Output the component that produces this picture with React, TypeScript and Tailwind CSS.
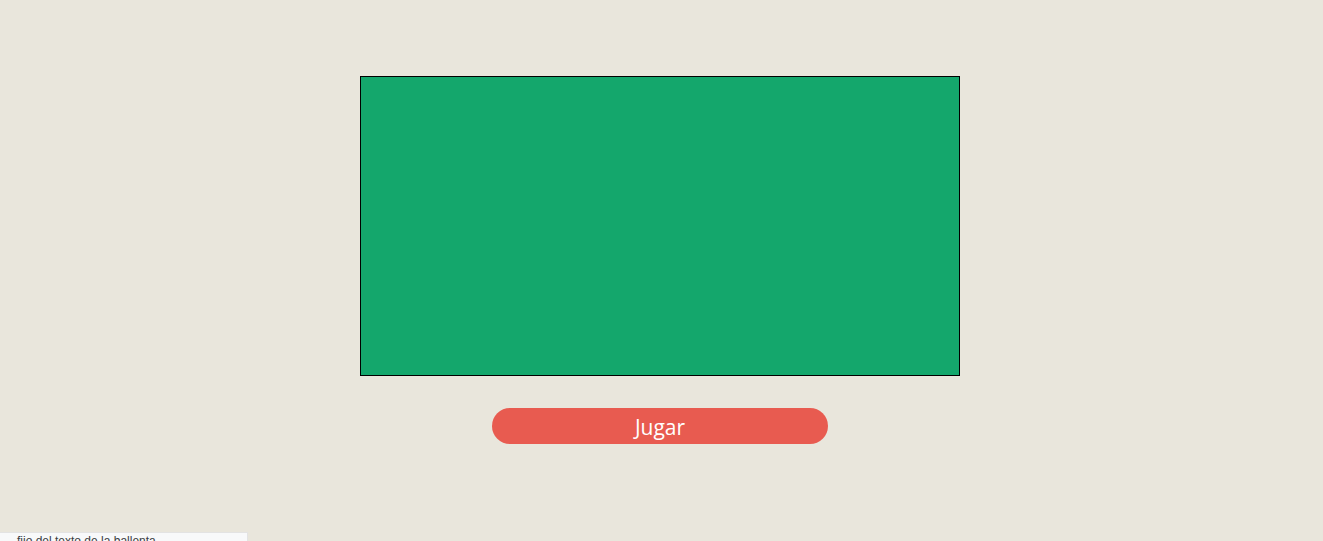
export default function App() {
  return (
    <div className="min-h-screen h-[541px] bg-[#e9e6dc] relative overflow-hidden" style={{ fontFamily: '"Open Sans", "Noto Sans", sans-serif' }}>
      <div className="w-[1320px] flex flex-col items-center pt-[76px] gap-8">
        {/* Game canvas */}
        <div className="w-[600px] h-[300px] bg-[#14a76c] border border-black"></div>

        <button className="w-[336px] h-9 rounded-full bg-[#e85b50] text-white text-[21px] leading-none flex items-center justify-center pt-[3px]">
          Jugar
        </button>
      </div>

      {/* Status bubble */}
      <div className="absolute left-0 bottom-0 w-[248px] h-[9px] bg-[#f8f9fa] border-t border-r border-[#e3e3e3] overflow-hidden">
        <p className="pl-[17px] pt-[1px] text-[12px] leading-[14px] text-[#3c4043] whitespace-nowrap" style={{ fontFamily: '"Liberation Sans", sans-serif' }}>
          fijo del texto de la ballenta
        </p>
      </div>
    </div>
  );
}
